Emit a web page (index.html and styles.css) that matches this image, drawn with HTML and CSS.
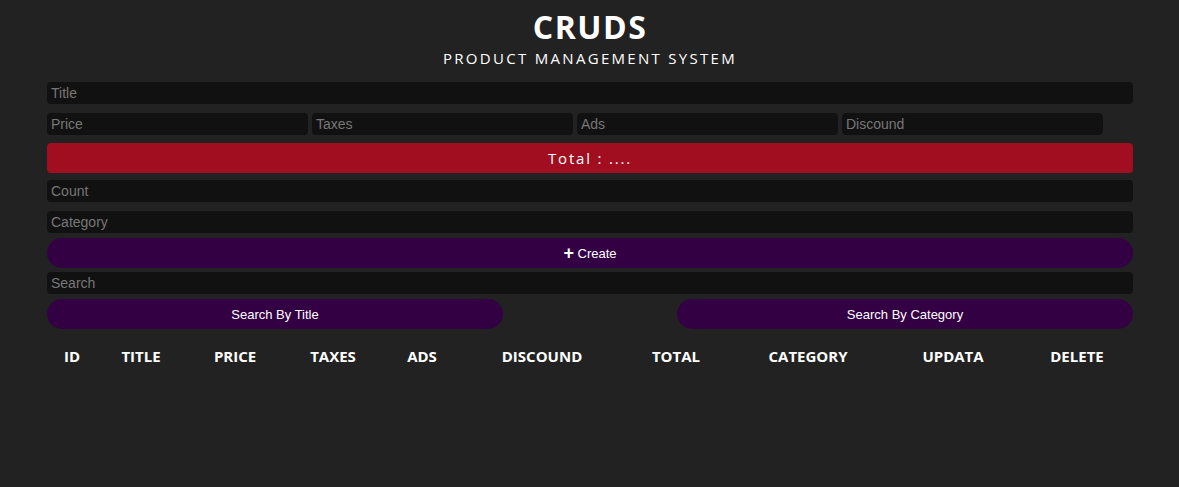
FILE: index.html
```html
<!DOCTYPE html>
<html lang="en">
<head>
<meta charset="utf-8">
<title>CRUDS</title>
<link rel="stylesheet" href="styles.css">
</head>
<body>
<div class="crud">
  <header class="head">
    <h1 class="brand">CRUDS</h1>
    <p class="tagline">PRODUCT MANAGEMENT SYSTEM</p>
  </header>
  <div class="inputs">
    <input class="field title-field" type="text" placeholder="Title">
    <div class="price">
      <input class="field small" type="number" placeholder="Price">
      <input class="field small" type="number" placeholder="Taxes">
      <input class="field small" type="number" placeholder="Ads">
      <input class="field small" type="number" placeholder="Discound">
    </div>
    <div class="total">Total : ....</div>
    <input class="field count-field" type="number" placeholder="Count">
    <input class="field cat-field" type="text" placeholder="Category">
    <button class="pill create"><span class="plus">+</span> Create</button>
  </div>
  <div class="search-block">
    <input class="field search-field" type="text" placeholder="Search">
    <div class="btn-search">
      <button class="pill half">Search By Title</button>
      <button class="pill half">Search By Category</button>
    </div>
  </div>
  <table class="outputs">
    <colgroup>
      <col class="c-id"><col class="c-title"><col class="c-price"><col class="c-taxes"><col class="c-ads"><col class="c-disc"><col class="c-total"><col class="c-cat"><col class="c-upd"><col class="c-del">
    </colgroup>
    <thead>
      <tr>
        <th>ID</th><th>TITLE</th><th>PRICE</th><th>TAXES</th><th>ADS</th><th>DISCOUND</th><th>TOTAL</th><th>CATEGORY</th><th>UPDATA</th><th>DELETE</th>
      </tr>
    </thead>
    <tbody></tbody>
  </table>
</div>
</body>
</html>
```
FILE: styles.css
```css
* { box-sizing: border-box; }
html, body { margin: 0; padding: 0; }
body {
  background: #222222;
  color: #ffffff;
  font-family: "Open Sans", "Noto Sans", sans-serif;
  height: 487px;
  overflow: hidden;
}
.crud {
  width: 1086px;
  margin: 0 auto 0 47px;
}
.head {
  text-align: center;
  padding-top: 6px;
}
.brand {
  margin: 0;
  font-size: 32px;
  font-weight: 700;
  line-height: 42px;
  letter-spacing: 1.5px;
}
.tagline {
  margin: 0;
  font-size: 15px;
  line-height: 20px;
  letter-spacing: 2.3px;
  font-weight: 400;
}
.inputs { margin-top: 14px; }
.field {
  display: block;
  width: 100%;
  height: 22px;
  border: none;
  outline: none;
  border-radius: 4px;
  background: #111111;
  color: #ffffff;
  padding: 0 4px;
  font-family: "Liberation Sans", Arial, sans-serif;
  font-size: 14px;
}
.field::placeholder { color: #777777; }
.price {
  display: flex;
  gap: 4px;
  margin-top: 9px;
}
.field.small { width: 261px; }
.total {
  margin-top: 8px;
  height: 30px;
  border-radius: 4px;
  background: #a00e20;
  text-align: center;
  font-size: 15px;
  line-height: 30px;
  letter-spacing: 1.8px;
}
.count-field { margin-top: 7px; }
.cat-field { margin-top: 9px; }
.pill {
  display: block;
  height: 30px;
  border: none;
  border-radius: 15px;
  background: #330044;
  color: #ffffff;
  font-family: "Liberation Sans", Arial, sans-serif;
  font-size: 13px;
  cursor: pointer;
  padding: 0;
}
.create {
  width: 100%;
  margin-top: 5px;
}
.plus {
  font-size: 18px;
  font-weight: 700;
  line-height: 1;
  vertical-align: -1px;
}
.search-field { margin-top: 4px; }
.btn-search {
  display: flex;
  justify-content: space-between;
  margin-top: 5px;
}
.half { width: 456px; }
.outputs {
  width: 1086px;
  table-layout: fixed;
  border-collapse: collapse;
  margin-top: 16px;
}
.c-id { width: 50px; }
.c-title { width: 88px; }
.c-price { width: 100px; }
.c-taxes { width: 96px; }
.c-ads { width: 82px; }
.c-disc { width: 158px; }
.c-total { width: 110px; }
.c-cat { width: 154px; }
.c-upd { width: 136px; }
.c-del { width: 112px; }
.outputs th {
  font-family: "Open Sans", "Noto Sans", sans-serif;
  font-size: 15px;
  font-weight: 700;
  text-align: center;
  padding: 0;
  height: 22px;
}
```
